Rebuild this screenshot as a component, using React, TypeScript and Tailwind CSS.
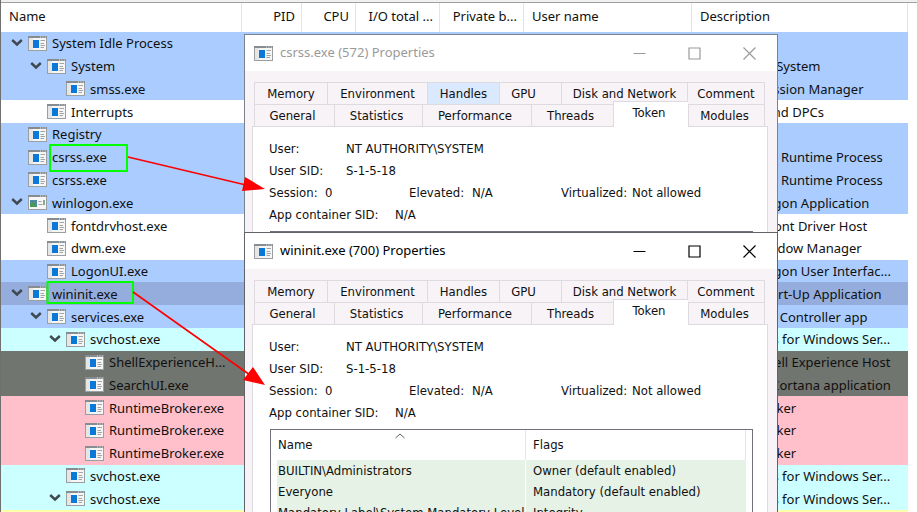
import React from "react";

type Process = {
  name: string;
  level: number;
  open?: boolean;
  tone: string;
  description: string;
  picture?: boolean;
};

const BLUE = "bg-[#aaccff]";
const WHITE = "bg-white";
const CYAN = "bg-[#ccffff]";
const GRAY = "bg-[#707570]";
const PINK = "bg-[#ffc0cb]";

const processes: Process[] = [
  { name: "System Idle Process", level: 0, open: true, tone: BLUE, description: "" },
  { name: "System", level: 1, open: true, tone: BLUE, description: "NT Kernel & System" },
  { name: "smss.exe", level: 2, tone: BLUE, description: "Windows Session Manager" },
  { name: "Interrupts", level: 1, tone: WHITE, description: "Interrupts and DPCs" },
  { name: "Registry", level: 0, tone: BLUE, description: "" },
  { name: "csrss.exe", level: 0, tone: BLUE, description: "Client Server Runtime Process" },
  { name: "csrss.exe", level: 0, tone: BLUE, description: "Client Server Runtime Process" },
  { name: "winlogon.exe", level: 0, open: true, tone: BLUE, description: "Windows Logon Application", picture: true },
  { name: "fontdrvhost.exe", level: 1, tone: WHITE, description: "Usermode Font Driver Host" },
  { name: "dwm.exe", level: 1, tone: WHITE, description: "Desktop Window Manager" },
  { name: "LogonUI.exe", level: 1, tone: BLUE, description: "Windows Logon User Interfac..." },
  { name: "wininit.exe", level: 0, open: true, tone: "bg-[#94addc]", description: "Windows Start-Up Application" },
  { name: "services.exe", level: 1, open: true, tone: BLUE, description: "Services and Controller app" },
  { name: "svchost.exe", level: 2, open: true, tone: CYAN, description: "Host Process for Windows Ser..." },
  { name: "ShellExperienceH...", level: 3, tone: GRAY, description: "Windows Shell Experience Host" },
  { name: "SearchUI.exe", level: 3, tone: GRAY, description: "Search and Cortana application" },
  { name: "RuntimeBroker.exe", level: 3, tone: PINK, description: "Runtime Broker" },
  { name: "RuntimeBroker.exe", level: 3, tone: PINK, description: "Runtime Broker" },
  { name: "RuntimeBroker.exe", level: 3, tone: PINK, description: "Runtime Broker" },
  { name: "svchost.exe", level: 2, tone: CYAN, description: "Host Process for Windows Ser..." },
  { name: "svchost.exe", level: 2, open: true, tone: CYAN, description: "Host Process for Windows Ser..." },
  { name: "", level: 3, tone: "bg-[#ffffaa]", description: "" },
];

const indents = ["pl-[10px]", "pl-[29px]", "pl-[48px]", "pl-[67px]"];

function AppIcon({ picture }: { picture?: boolean }) {
  return (
    <svg className="h-[15px] w-[19px] shrink-0" viewBox="0 0 19 15" aria-hidden="true">
      <rect x="0" y="0" width="19" height="15" fill="#9a9fa2" />
      <rect x="0" y="0" width="19" height="2" fill="#868c90" />
      <rect x="1" y="2" width="17" height="12" fill="#f6f6f6" />
      <path d="M12 1h1M14.400 1h1M16.800 1h1" stroke="#e8e8e8" strokeWidth="1" />
      {picture ? (
        <>
          <rect x="2" y="5" width="7" height="7" fill="#4f8ba0" />
          <path d="M2 12V9l3-2 4 5z" fill="#4a9a52" />
          <path d="M10.500 6.500h3M10.500 9.500h4" stroke="#a4a4a4" />
          <path d="M16 5v5" stroke="#3c7d5a" strokeWidth="1.200" />
        </>
      ) : (
        <>
          <rect x="1" y="2" width="4" height="12" fill="#e6e6e6" />
          <rect x="5" y="4" width="6" height="8" fill="#0a78d6" />
          <path d="M12.500 4.500h4.500M12.500 7.500h3.500M12.500 9.500h4.500M12.500 11.500h3.500" stroke="#a4a4a4" strokeWidth="1" />
        </>
      )}
    </svg>
  );
}

function Chevron() {
  return (
    <svg className="h-[9px] w-[12px]" viewBox="0 0 12 9" fill="none" aria-hidden="true">
      <path d="M1.200 1 6 5.500 10.800 1" stroke="#404850" strokeWidth="2.400" />
    </svg>
  );
}

const thClass = "border-r border-[#e5e5e5] pb-[3px] font-normal whitespace-nowrap";

function ProcessTable() {
  return (
    <table className="h-[530px] w-full table-fixed border-separate border-spacing-0 text-[13px] leading-[20px]">
      <colgroup>
        <col className="w-[241px]" />
        <col className="w-[60px]" />
        <col className="w-[54px]" />
        <col className="w-[84px]" />
        <col className="w-[84px]" />
        <col className="w-[168px]" />
        <col className="w-[216px]" />
        <col />
      </colgroup>
      <thead>
        <tr className="h-[29px]">
          <th className={`${thClass} pl-[8px] text-left`}>Name</th>
          <th className={`${thClass} pr-[6px] text-right`}>PID</th>
          <th className={`${thClass} pr-[6px] text-right`}>CPU</th>
          <th className={`${thClass} pr-[6px] text-right`}>I/O total ...</th>
          <th className={`${thClass} pr-[6px] text-right`}>Private b...</th>
          <th className={`${thClass} pl-[8px] text-left`}>User name</th>
          <th className={`${thClass} pl-[8px] text-left`}>Description</th>
          <td />
        </tr>
      </thead>
      <tbody>
        {processes.map((p, i) => (
          <tr key={i} className="h-[22px]">
            <td className={`${p.tone} p-0`}>
              <div className={`flex items-center ${indents[p.level]}`}>
                <span className="flex w-[17px] shrink-0">{p.open && <Chevron />}</span>
                {p.name && <AppIcon picture={p.picture} />}
                <span className="ml-[5px] whitespace-nowrap">{p.name}</span>
              </div>
            </td>
            <td colSpan={5} className={`${p.tone} p-0`} />
            <td className={`${p.tone} overflow-hidden p-0 pl-[8px] whitespace-nowrap`}>{p.description}</td>
            <td className="p-0" />
          </tr>
        ))}
      </tbody>
    </table>
  );
}

const backTabs = [
  { label: "Memory", width: "w-[73px]" },
  { label: "Environment", width: "w-[100px]" },
  { label: "Handles", width: "w-[72px]" },
  { label: "GPU", width: "w-[62px] pr-[14px]" },
  { label: "Disk and Network", width: "w-[126px]" },
  { label: "Comment", width: "w-[78px]" },
];

const frontTabs = [
  { label: "General", width: "w-[80px]" },
  { label: "Statistics", width: "w-[88px]" },
  { label: "Performance", width: "w-[109px]" },
  { label: "Threads", width: "w-[82px]" },
  { label: "Token", width: "w-[75px]" },
  { label: "Modules", width: "w-[77px]" },
];

type DialogProps = { title: string; active: boolean; hotTab?: string; place: string };

function TokenDialog({ title, active, hotTab, place }: DialogProps) {
  return (
    <section
      role="dialog"
      aria-label={title}
      className={`absolute left-[244px] h-[420px] w-[534px] border bg-[#f7f3f7] text-[#101010] ${
        active ? "border-[#606468]" : "border-[#7a828c]"
      } ${place}`}
    >
      <header
        className={`flex h-[36px] items-center bg-white pl-[9px] text-[13px] ${
          active ? "text-black" : "text-[#9a9a9a]"
        }`}
      >
        <AppIcon />
        <h2 className="ml-[7px] grow">{title}</h2>
        <button aria-label="Minimize" className="flex w-[55px] justify-center">
          <svg className="size-[13px]" viewBox="0 0 13 13" stroke="currentColor" fill="none">
            <path d="M0.500 6.500h12" />
          </svg>
        </button>
        <button aria-label="Maximize" className="flex w-[55px] justify-center">
          <svg className="size-[13px]" viewBox="0 0 13 13" stroke="currentColor" fill="none">
            <path d="M1 1h11v11H1z" strokeWidth="1.200" />
          </svg>
        </button>
        <button aria-label="Close" className="flex w-[55px] justify-center">
          <svg className="size-[13px]" viewBox="0 0 13 13" stroke="currentColor" fill="none">
            <path d="M0.500 0.500l12 12M12.500 0.500l-12 12" strokeWidth="1.200" />
          </svg>
        </button>
      </header>

      <div className="pt-[11px] font-['DejaVu_Sans_Condensed','DejaVu_Sans',sans-serif] text-[13px]">
        <div role="tablist" className="pl-[9px]">
          <div className="flex">
            {backTabs.map((t, i) => (
              <button
                key={t.label}
                role="tab"
                className={`h-[22px] border-t border-l border-[#dedbe0] whitespace-nowrap ${
                  i === backTabs.length - 1 ? "border-r" : ""
                } ${t.label === hotTab ? "bg-[#dbe9ff]" : ""} ${t.width}`}
              >
                {t.label}
              </button>
            ))}
          </div>
          <div className="flex items-end">
            {frontTabs.map((t, i) => (
              <button
                key={t.label}
                role="tab"
                aria-selected={t.label === "Token"}
                className={`border-t border-l border-[#dedbe0] pr-[4px] whitespace-nowrap ${
                  t.label === "Token" ? "relative z-10 -mt-[3px] -mb-px h-[26px] bg-white pb-[3px]" : "h-[22px]"
                } ${i === frontTabs.length - 1 ? "border-r" : ""} ${t.width}`}
              >
                {t.label}
              </button>
            ))}
          </div>
        </div>

        <div className="mr-[9px] ml-[7px] h-[400px] border border-[#dedbe0] bg-white px-[16px] pt-[11px] leading-[22px]">
          <div className="flex">
            <span className="w-[77px]">User:</span>
            <span>NT AUTHORITY\SYSTEM</span>
          </div>
          <div className="flex">
            <span className="w-[77px]">User SID:</span>
            <span>S-1-5-18</span>
          </div>
          <div className="flex">
            <span className="w-[56px]">Session:</span>
            <span className="w-[84px]">0</span>
            <span className="w-[63px]">Elevated:</span>
            <span className="w-[89px]">N/A</span>
            <span className="w-[71px]">Virtualized:</span>
            <span>Not allowed</span>
          </div>
          <div className="flex">
            <span className="w-[126px]">App container SID:</span>
            <span>N/A</span>
          </div>

          <div className="relative mt-[5px] mr-[-2px] ml-px h-[280px] border border-[#70707c] px-[6px]">
            <svg className="absolute top-[3px] left-[124px] h-[6px] w-[10px]" viewBox="0 0 10 6" fill="none" aria-hidden="true">
              <path d="M0.500 5 5 1 9.500 5" stroke="#606060" />
            </svg>
            <table className="w-full table-fixed border-separate border-spacing-0">
              <thead>
                <tr className="h-[30px]">
                  <th className="w-[249px] border-r border-[#e5e5e5] p-0 pl-px text-left font-normal">Name</th>
                  <th className="border-r border-[#e5e5e5] p-0 pl-[7px] text-left font-normal">Flags</th>
                </tr>
              </thead>
              <tbody className="leading-[21px]">
                {[
                  ["BUILTIN\\Administrators", "Owner (default enabled)"],
                  ["Everyone", "Mandatory (default enabled)"],
                  ["Mandatory Label\\System Mandatory Level", "Integrity"],
                ].map(([name, flags]) => (
                  <tr key={name} className="h-[21px]">
                    <td className="overflow-hidden border-r border-white bg-[#e6f2e6] bg-clip-padding p-0 pl-px whitespace-nowrap">{name}</td>
                    <td className="overflow-hidden bg-[#e6f2e6] p-0 pl-[7px] whitespace-nowrap">{flags}</td>
                  </tr>
                ))}
              </tbody>
            </table>
          </div>
        </div>
      </div>
    </section>
  );
}

function Annotations() {
  return (
    <svg className="pointer-events-none absolute top-0 left-0 z-30 h-[512px] w-[300px]" viewBox="0 0 300 512" fill="none" aria-hidden="true">
      <path d="M50 145h77v26H50zM47.500 282h85.500v21H47.500z" stroke="#00ff00" strokeWidth="2" />
      <path d="M128 157 246 185M133 292 250 375" stroke="#ff0000" strokeWidth="1.600" />
      <path d="M265 189 245 177 242 191zM265 385 253 367 243 380z" fill="#ff0000" />
    </svg>
  );
}

export default function App() {
  return (
    <main className="relative h-screen overflow-hidden border-l border-[#707070] bg-white font-['Noto_Sans','Open_Sans',sans-serif] text-[#101010]">
      <div className="h-[3px] border-b border-[#a0a0a0] bg-[#f0f0f0]" />
      <ProcessTable />
      <div className="absolute inset-y-0 -left-px">
        <TokenDialog title="csrss.exe (572) Properties" active={false} hotTab="Handles" place="top-[34px]" />
        <TokenDialog title="wininit.exe (700) Properties" active place="top-[232px] z-20" />
        <Annotations />
      </div>
    </main>
  );
}
